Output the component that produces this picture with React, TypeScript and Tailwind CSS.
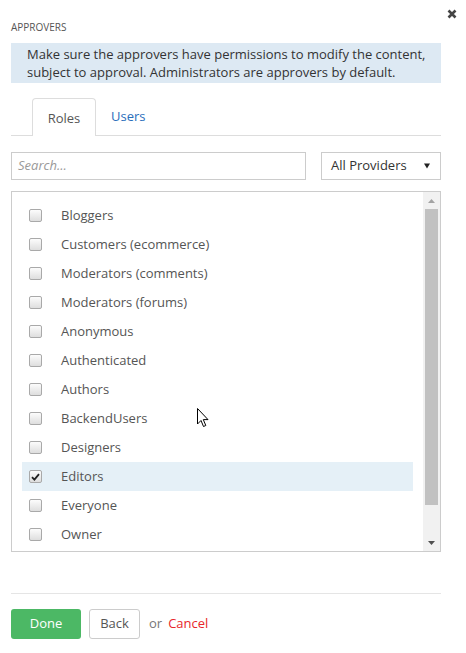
import React from "react";

const roles = [
  "Bloggers",
  "Customers (ecommerce)",
  "Moderators (comments)",
  "Moderators (forums)",
  "Anonymous",
  "Authenticated",
  "Authors",
  "BackendUsers",
  "Designers",
  "Editors",
  "Everyone",
  "Owner",
];

const Checkbox = ({ checked }: { checked: boolean }) => (
  <span className="w-[13px] h-[13px] rounded-[2px] border border-[#a9a9a9] bg-gradient-to-b from-[#fcfcfc] to-[#dedede] flex items-center justify-center shrink-0">
    {checked && (
      <svg width="9" height="8" viewBox="0 0 9 8">
        <path d="M1 4.2 L3.4 6.6 L8 1.2" stroke="#222" strokeWidth="1.8" fill="none" />
      </svg>
    )}
  </span>
);

export default function App() {
  return (
    <div className="w-[466px] h-[653px] bg-white relative font-['Open_Sans',sans-serif] text-[13px] text-[#555] pl-[11px] pr-[25px]">
      <div className="flex justify-end -mr-[16px] pt-[9px] h-[17px]">
        <svg width="10" height="10" viewBox="0 0 10 10">
          <path d="M1.5 1.5 L8.5 8.5 M8.5 1.5 L1.5 8.5" stroke="#444" strokeWidth="2.6" />
        </svg>
      </div>
      <div className="text-[10px] leading-[14px] text-[#555] mt-[3px]">APPROVERS</div>
      <div className="mt-[9px] bg-[#dde9f3] text-[#333] leading-[18px] pl-[16px] pr-[6px] py-[2px] h-[40px]">
        Make sure the approvers have permissions to modify the content, subject to approval. Administrators are approvers by default.
      </div>

      <div className="mt-[15px] flex border-b border-[#ddd] h-[38px]">
        <div className="ml-[21px] w-[64px] border border-b-0 border-[#ddd] rounded-t-[4px] bg-white -mb-px flex items-center justify-center text-[#555] pt-[2px]">
          Roles
        </div>
        <div className="ml-[15px] flex items-center text-[#2a6ebb] pt-[1px]">Users</div>
      </div>

      <div className="mt-[16px] flex justify-between">
        <div className="w-[295px] h-[28px] border border-[#ccc] flex items-center px-[6px] italic text-[#999]">
          Search...
        </div>
        <div className="w-[120px] h-[28px] border border-[#ccc] flex items-center justify-between pl-[9px] pr-[10px] text-[#333]">
          <span>All Providers</span>
          <svg width="6" height="6" viewBox="0 0 6 6">
            <path d="M0 0.5 L6 0.5 L3 5.5 Z" fill="#222" />
          </svg>
        </div>
      </div>

      <div className="mt-[11px] h-[361px] border border-[#ccc] flex">
        <div className="flex-1 pl-[10px] pr-[10px] pt-[9px]">
          {roles.map((r) => (
            <div
              key={r}
              className={`h-[29px] flex items-center pl-[7px] ${r === "Editors" ? "bg-[#e5f0f7]" : ""}`}
            >
              <Checkbox checked={r === "Editors"} />
              <span className="ml-[19px]">{r}</span>
            </div>
          ))}
        </div>
        <div className="w-[17px] bg-[#f1f1f1] flex flex-col items-center">
          <div className="h-[17px] flex items-center justify-center">
            <svg width="7" height="4" viewBox="0 0 7 4">
              <path d="M0 4 L7 4 L3.5 0 Z" fill="#a3a3a3" />
            </svg>
          </div>
          <div className="w-[13px] h-[296px] bg-[#c1c1c1]" />
          <div className="flex-1" />
          <div className="h-[17px] flex items-center justify-center">
            <svg width="7" height="4" viewBox="0 0 7 4">
              <path d="M0 0 L7 0 L3.5 4 Z" fill="#505050" />
            </svg>
          </div>
        </div>
      </div>

      <div className="mt-[41px] border-t border-[#e5e5e5]" />

      <div className="mt-[15px] flex items-center">
        <div className="w-[70px] h-[30px] rounded-[3px] bg-[#4cb865] text-white flex items-center justify-center">
          Done
        </div>
        <div className="ml-[8px] w-[51px] h-[30px] rounded-[3px] border border-[#ccc] text-[#555] flex items-center justify-center">
          Back
        </div>
        <span className="ml-[9px] text-[#777]">or</span>
        <span className="ml-[6px] text-[#e8262b]">Cancel</span>
      </div>

      <svg className="absolute left-[197px] top-[408px]" width="13" height="20" viewBox="0 0 13 20">
        <path
          d="M0.5 0.5 L0.5 16 L4 12.5 L6.5 18.5 L8.8 17.5 L6.3 11.6 L11 11.6 Z"
          fill="#fff"
          stroke="#000"
          strokeWidth="1"
          strokeLinejoin="miter"
        />
      </svg>
    </div>
  );
}
